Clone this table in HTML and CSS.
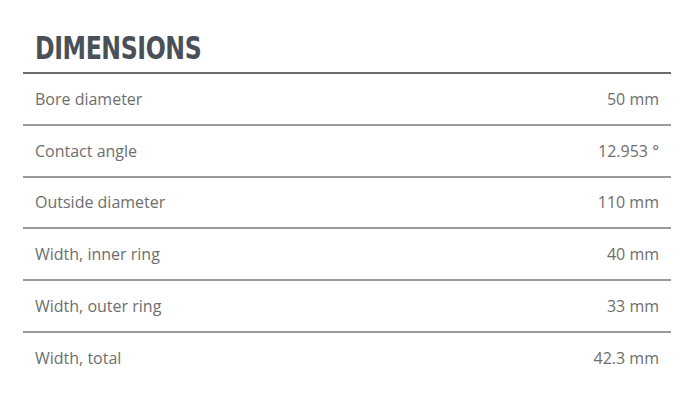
FILE: index.html
```html
<!DOCTYPE html>
<html>
<head>
<meta charset="utf-8">
<link rel="stylesheet" href="styles.css">
</head>
<body>
<section class="dims">
  <h2 class="dims-title"><span class="title-text">DIMENSIONS</span></h2>
  <div class="dims-table">
    <div class="row"><span class="label">Bore diameter</span><span class="value">50 mm</span></div>
    <div class="row"><span class="label">Contact angle</span><span class="value">12.953 °</span></div>
    <div class="row"><span class="label">Outside diameter</span><span class="value">110 mm</span></div>
    <div class="row"><span class="label">Width, inner ring</span><span class="value">40 mm</span></div>
    <div class="row"><span class="label">Width, outer ring</span><span class="value">33 mm</span></div>
    <div class="row last"><span class="label">Width, total</span><span class="value">42.3 mm</span></div>
  </div>
</section>
</body>
</html>
```

FILE: styles.css
```css
html, body {
  margin: 0;
  padding: 0;
  background: #ffffff;
}
.dims {
  width: 648px;
  margin-left: 23px;
  padding-top: 30px;
}
.dims-title {
  margin: 0;
  padding: 0 0 6px 12px;
  font-family: "DejaVu Sans Condensed", sans-serif;
  font-weight: 700;
  font-size: 32px;
  line-height: 36px;
  color: #4a5058;
  border-bottom: 2px solid #6b6b6b;
}
.title-text {
  display: inline-block;
  transform: scaleX(0.82);
  transform-origin: left center;
  letter-spacing: -0.5px;
}
.row {
  display: flex;
  justify-content: space-between;
  align-items: center;
  height: 49.75px;
  padding: 0 12px;
  border-bottom: 2px solid #9a9a9a;
  font-family: "Open Sans", sans-serif;
  font-size: 16px;
  color: #6e6e6e;
}
.row.last {
  border-bottom: none;
}
```
